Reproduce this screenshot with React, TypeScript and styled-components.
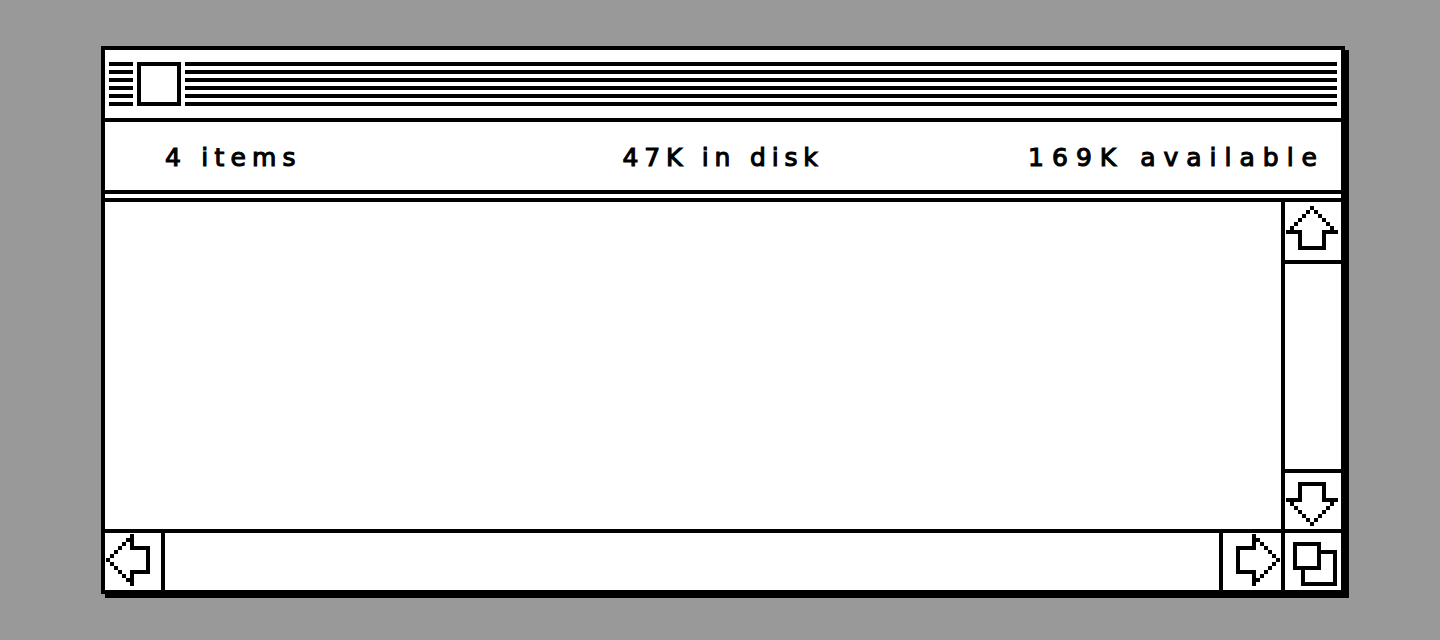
import React from 'react';
import styled, { createGlobalStyle } from 'styled-components';

const GlobalStyle = createGlobalStyle`
  html, body { margin: 0; background: #999999; }
  body { font-family: "DejaVu Sans", "Liberation Sans", sans-serif; }
`;

const Page = styled.div`
  display: flex;
  align-items: flex-start;
  box-sizing: border-box;
  height: 640px;
  padding: 46px 0 0 101px;
`;

const Window = styled.div`
  width: 1244px;
  height: 548px;
  box-sizing: border-box;
  border: 4px solid #000;
  background: #fff;
  box-shadow: 4px 4px 0 #000;
  display: flex;
  flex-direction: column;
`;

const TitleBar = styled.div`
  height: 72px;
  box-sizing: border-box;
  border-bottom: 4px solid #000;
  padding: 12px 4px;
  display: flex;
  gap: 4px;
`;

const Stripes = styled.div<{ $width?: number }>`
  height: 44px;
  ${p => (p.$width ? `width: ${p.$width}px; flex-shrink: 0;` : 'flex: 1;')}
  background: repeating-linear-gradient(to bottom, #000 0 4px, #fff 4px 8px);
`;

const CloseBox = styled.div`
  width: 44px;
  height: 44px;
  box-sizing: border-box;
  border: 4px solid #000;
  background: #fff;
  flex-shrink: 0;
`;

const InfoBar = styled.div`
  height: 80px;
  box-sizing: border-box;
  border-bottom: 12px double #000;
  padding: 22px 16px 0;
  display: grid;
  grid-template-columns: 1fr auto 1fr;
  align-items: start;
  font-size: 25px;
  line-height: 28px;
  color: #000;
  -webkit-text-stroke: 1.1px #000;
`;

const Label = styled.span<{ $align: 'start' | 'center' | 'end'; $inset?: number; $spacing: number }>`
  justify-self: ${p => p.$align};
  margin-left: ${p => p.$inset ?? 0}px;
  letter-spacing: ${p => p.$spacing}px;
  white-space: nowrap;
`;

const Body = styled.div`
  flex: 1;
  display: flex;
  flex-direction: column;
`;

const Main = styled.div`
  flex: 1;
  display: flex;
`;

const Content = styled.div`
  flex: 1;
`;

const VScroll = styled.div`
  width: 60px;
  box-sizing: border-box;
  border-left: 4px solid #000;
  display: flex;
  flex-direction: column;
`;

const VTrack = styled.div`
  flex: 1;
  border-top: 4px solid #000;
  border-bottom: 4px solid #000;
`;

const HScroll = styled.div`
  height: 61px;
  box-sizing: border-box;
  border-top: 4px solid #000;
  display: flex;
`;

const HTrack = styled.div`
  flex: 1;
  border-left: 4px solid #000;
  border-right: 4px solid #000;
`;

const ScrollButton = styled.div<{ $w?: number; $h?: number; $top: number; $left: number }>`
  ${p => (p.$w ? `width: ${p.$w}px;` : '')}
  ${p => (p.$h ? `height: ${p.$h}px;` : '')}
  box-sizing: border-box;
  flex-shrink: 0;
  display: flex;
  align-items: flex-start;
  padding: ${p => `${p.$top}px 0 0 ${p.$left}px`};
  svg { display: block; }
`;

const GrowBox = styled.div`
  width: 60px;
  box-sizing: border-box;
  border-left: 4px solid #000;
  flex-shrink: 0;
  svg { display: block; }
`;

type Dir = 'up' | 'down' | 'left' | 'right';

// pixel outline of the up arrow on a 13 x 11 grid
const upCells: [number, number][] = (() => {
  const cells: [number, number][] = [[6, 0]];
  for (let r = 1; r <= 5; r++) cells.push([6 - r, r], [6 + r, r]);
  for (const c of [0, 1, 2, 3, 9, 10, 11, 12]) cells.push([c, 6]);
  for (let r = 7; r <= 9; r++) cells.push([3, r], [9, r]);
  for (let c = 3; c <= 9; c++) cells.push([c, 10]);
  return cells;
})();

const U = 4;

function Arrow({ dir }: { dir: Dir }) {
  const vertical = dir === 'up' || dir === 'down';
  const w = vertical ? 13 : 11;
  const h = vertical ? 11 : 13;
  const cells = upCells.map(([c, r]) => {
    if (dir === 'up') return [c, r];
    if (dir === 'down') return [c, 10 - r];
    if (dir === 'left') return [r, c];
    return [10 - r, c];
  });
  return (
    <svg width={w * U} height={h * U} shapeRendering="crispEdges">
      {cells.map(([x, y], i) => (
        <rect key={i} x={x * U} y={y * U} width={U} height={U} fill="#000" />
      ))}
    </svg>
  );
}

function GrowIcon() {
  return (
    <svg width={56} height={57} shapeRendering="crispEdges">
      <rect x={16} y={17} width={36} height={36} fill="#000" />
      <rect x={20} y={21} width={28} height={28} fill="#fff" />
      <rect x={8} y={9} width={28} height={28} fill="#000" />
      <rect x={12} y={13} width={20} height={20} fill="#fff" />
    </svg>
  );
}

export default function App() {
  return (
    <>
      <GlobalStyle />
      <Page>
        <Window>
          <TitleBar>
            <Stripes $width={24} />
            <CloseBox />
            <Stripes />
          </TitleBar>
          <InfoBar>
            <Label $align="start" $inset={44} $spacing={6.2}>4 items</Label>
            <Label $align="center" $spacing={5.8}>47K in disk</Label>
            <Label $align="end" $spacing={8}>169K available</Label>
          </InfoBar>
          <Body>
            <Main>
              <Content />
              <VScroll>
                <ScrollButton $h={58} $top={4} $left={1}>
                  <Arrow dir="up" />
                </ScrollButton>
                <VTrack />
                <ScrollButton $h={56} $top={9} $left={1}>
                  <Arrow dir="down" />
                </ScrollButton>
              </VScroll>
            </Main>
            <HScroll>
              <ScrollButton $w={56} $top={1} $left={1}>
                <Arrow dir="left" />
              </ScrollButton>
              <HTrack />
              <ScrollButton $w={58} $top={1} $left={13}>
                <Arrow dir="right" />
              </ScrollButton>
              <GrowBox>
                <GrowIcon />
              </GrowBox>
            </HScroll>
          </Body>
        </Window>
      </Page>
    </>
  );
}
